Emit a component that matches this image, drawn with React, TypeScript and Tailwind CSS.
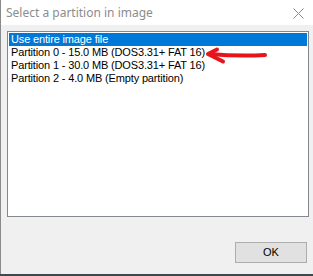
const items = [
  "Use entire image file",
  "Partition 0 - 15.0 MB (DOS3.31+ FAT 16)",
  "Partition 1 - 30.0 MB (DOS3.31+ FAT 16)",
  "Partition 2 - 4.0 MB (Empty partition)",
];

export default function App() {
  return (
    <div className="w-[313px] h-[276px] bg-[#3a4a4f] overflow-hidden">
      <div className="w-[313px] h-[274px] flex flex-col bg-[#f0f0f0] border-l border-[#8a8a8a]">
        {/* title bar */}
        <div className="h-[25px] bg-white flex items-center justify-between pl-[5px] pr-[9px]">
          <span className="text-[12px] text-[#8c8c8c] font-['Noto_Sans',sans-serif] leading-none">
            Select a partition in image
          </span>
          <svg width="11" height="11" viewBox="0 0 11 11" className="mt-[1px]">
            <path d="M0.5 0.5 L10.5 10.5 M10.5 0.5 L0.5 10.5" stroke="#8c8c8c" strokeWidth="1" />
          </svg>
        </div>

        <div className="flex-1 flex flex-col px-[6px] pt-[6px] pb-[11px]">
          {/* list box */}
          <div className="relative h-[186px] w-[302px] bg-white border border-[#828790] p-[1px]">
            {items.map((t, i) => (
              <div
                key={t}
                className={`h-[13px] pl-[2px] text-[11px] tracking-[-0.15px] leading-[13px] font-['Liberation_Sans',Arial,sans-serif] ${
                  i === 0 ? "bg-[#0078d7] text-white" : "text-black"
                }`}
              >
                {t}
              </div>
            ))}
            <svg
              className="absolute left-[189px] top-[12px]"
              width="72"
              height="22"
              viewBox="0 0 72 22"
            >
              <path
                d="M12 10 C 30 11.5, 50 12, 68 11"
                stroke="#e8141c"
                strokeWidth="4"
                fill="none"
                strokeLinecap="round"
              />
              <path
                d="M20 5.5 L11 10 L26 17.5"
                stroke="#e8141c"
                strokeWidth="4"
                fill="none"
                strokeLinecap="round"
                strokeLinejoin="round"
              />
            </svg>
          </div>

          <div className="flex-1" />
          <div className="flex justify-end">
            <button className="w-[72px] h-[21px] bg-[#e1e1e1] border border-[#adadad] text-[11px] text-black font-['Liberation_Sans',Arial,sans-serif] leading-none">
              OK
            </button>
          </div>
        </div>
      </div>
    </div>
  );
}
